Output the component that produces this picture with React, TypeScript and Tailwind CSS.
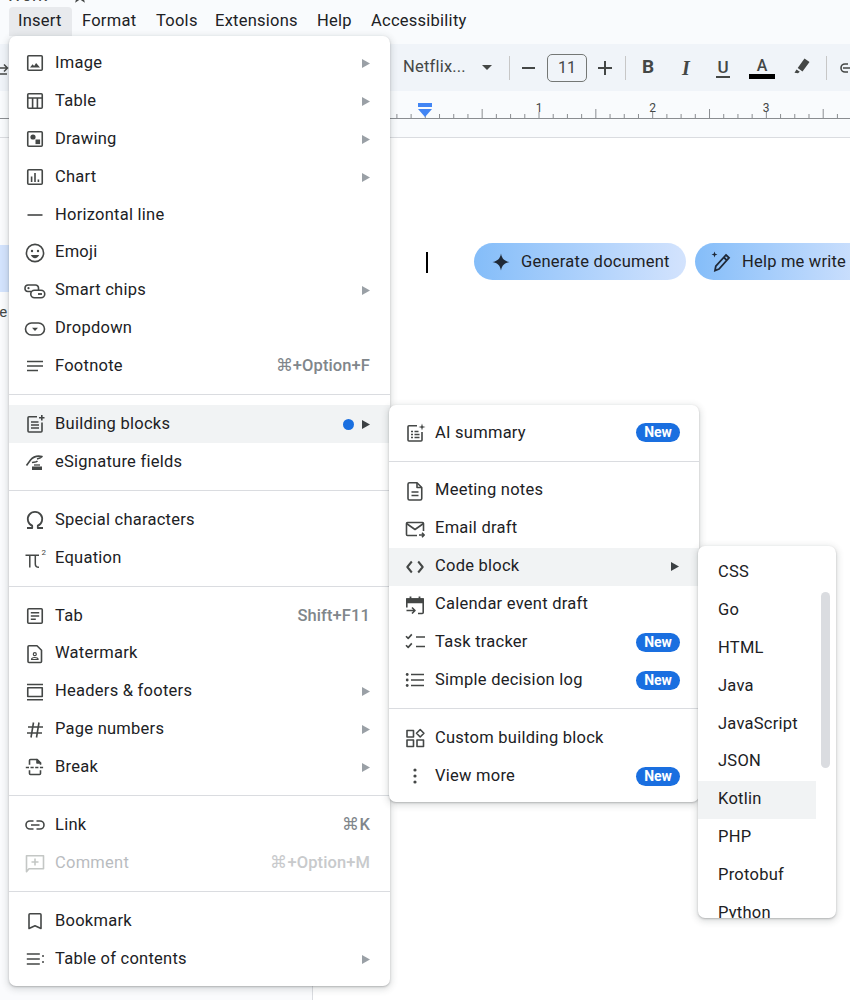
import React from "react";

const S = (p: { children: React.ReactNode; c?: string }) => (
  <svg width="24" height="24" viewBox="0 0 24 24" fill="none" stroke={p.c || "#444746"} strokeWidth="1.6" strokeLinecap="butt" strokeLinejoin="round" className="shrink-0">
    {p.children}
  </svg>
);
const G = "#444746";
const box = <rect x="4.75" y="4.75" width="14.5" height="14.5" rx="1" />;

const icons: Record<string, React.ReactNode> = {
  image: <S>{box}<path d="M7 16.5l2.6-3.2 1.5 1.6 2-3 3.9 4.6z" fill={G} stroke="none" /></S>,
  table: <S>{box}<path d="M4.75 9h14.5M9.6 9v10.25M14.4 9v10.25" /></S>,
  drawing: <S>{box}<circle cx="10" cy="10" r="2.6" fill={G} stroke="none" /><rect x="12.5" y="12.5" width="4.6" height="4.6" fill={G} stroke="none" /></S>,
  chart: <S>{box}<path d="M8.6 11.5v5.5M12 8v9M15.4 14.5V17" /></S>,
  hline: <S><path d="M4.5 12h15" /></S>,
  emoji: <S><circle cx="12" cy="12" r="8.6" /><circle cx="9" cy="10" r="1.2" fill={G} stroke="none" /><circle cx="15" cy="10" r="1.2" fill={G} stroke="none" /><path d="M7.8 14c.9 2 2.4 3.2 4.2 3.2s3.300-1.200 4.200-3.200z" fill={G} stroke="none" /></S>,
  chips: <S><path d="M15.500 11.500V9a3 3 0 0 0-3-3H5.500a3.250 3.250 0 0 0-.5 6.500h3" /><rect x="7.750" y="11.250" width="14" height="7.500" rx="3.750" /><circle cx="5.500" cy="9.200" r="1.100" fill={G} stroke="none" /><path d="M15 15h4" strokeWidth="1.800" /></S>,
  dropdown: <S><rect x="2.500" y="6" width="19" height="12" rx="6" /><path d="M9 10.800h6l-3 3.200z" fill={G} stroke="none" /></S>,
  footnote: <S><path d="M4 7.500h16M4 12h16M4 16.500h11" /></S>,
  blocks: <S><path d="M14 4.750H6a1 1 0 0 0-1 1V19a1 1 0 0 0 1 1h12a1 1 0 0 0 1-1v-8.500" /><path d="M8 10h7.500M8 13h8M8 16h8" /><path d="M18.800 3v5.500M16 5.750h5.500" /></S>,
  esig: <S><path d="M3.500 15.500l4-5.500c2.500-3 7-4.500 11.500-3.500-1 1.500-3 2-5 2.500M9 12.500c1.500-.5 4 0 5.500-1.500" /><rect x="9" y="16.500" width="10" height="3.500" fill={G} stroke="none" /><path d="M11 15h6" strokeWidth="1.300" /></S>,
  omega: <S><path d="M4 20h5.200v-2.300a7.200 7.200 0 1 1 5.600 0V20H20" strokeWidth="1.800" /></S>,
  pi: <S><path d="M2.500 9.200h13.500M6.800 9.200v12.300M12.300 9.200v8.800c0 2 1 3.300 3.700 3.300" strokeWidth="1.500" /><text x="18.500" y="9" fontSize="8" fill={G} stroke="none" fontFamily="Roboto">2</text></S>,
  tab: <S>{box}<path d="M7.800 8.700h8.400M7.800 12h8.400M7.800 15.300h5" /></S>,
  watermark: <S><path d="M6 3.750h8l4.500 4.500V19.500a1 1 0 0 1-1 1H6a1 1 0 0 1-1-1V4.750a1 1 0 0 1 1-1z" /><circle cx="11.800" cy="12.200" r="1.500" strokeWidth="1.200" /><path d="M8.500 17.500a3.300 2 0 0 1 6.600 0z" strokeWidth="1.200" /></S>,
  headers: <S><path d="M4 4.500h16M4 19.750h16" /><rect x="4.750" y="7.750" width="14.500" height="8.700" /></S>,
  hash: <S><path d="M5 9h15M4 15h15M10.500 4.500L8 19.500M16 4.500l-2.500 15" /></S>,
  breakI: <S><path d="M6.500 9.800V5.500a1 1 0 0 1 1-1h6.500l3.500 3.500v1.800" /><path d="M14 4.500v3.500h3.500z" fill={G} /><path d="M2.800 12.500h18.500" strokeDasharray="3.200 1.500" /><path d="M6.500 15.300v3.200a1 1 0 0 0 1 1h9a1 1 0 0 0 1-1v-3.200" /></S>,
  link: <S><path d="M10.500 8H7a4 4 0 0 0 0 8h3.500M13.500 8H17a4 4 0 0 1 0 8h-3.500M8 12h8.500" /></S>,
  comment: <S c="#c4c7c5"><path d="M3.500 4.750h17v13H6l-2.500 3z" /><path d="M12 7.500v7M8.500 11h7" /></S>,
  bookmark: <S><path d="M7 4.750h10a1 1 0 0 1 1 1V19.500l-6-2.700-6 2.700V5.750a1 1 0 0 1 1-1z" /></S>,
  toc: <S><path d="M3.800 7h13M3.800 12h13M3.800 17h13" /><circle cx="20" cy="9" r="1" fill={G} stroke="none" /><circle cx="20" cy="15" r="1" fill={G} stroke="none" /></S>,
  ai: <S><path d="M14 4.750H6a1 1 0 0 0-1 1V19a1 1 0 0 0 1 1h12a1 1 0 0 0 1-1v-8" /><path d="M8 10.500h2M11.500 10.500h4M8 13.500h2M11.500 13.500h5M8 16.500h2M11.500 16.500h5" /><path d="M19 2.500l.8 2.700 2.700.8-2.700.8-.8 2.700-.8-2.700-2.700-.8 2.700-.8z" fill={G} stroke="none" /></S>,
  meeting: <S><path d="M6.500 3.750h7.500l4.750 4.750V19.500a1.500 1.500 0 0 1-1.500 1.500H6.500A1.500 1.500 0 0 1 5 19.500V5.250a1.500 1.500 0 0 1 1.500-1.500z" /><path d="M14 3.750V8.500h4.750M8.500 13h7M8.500 16.500h7" /></S>,
  email: <S><path d="M14 18.500H4.500a1 1 0 0 1-1-1V6.500a1 1 0 0 1 1-1h15a1 1 0 0 1 1 1V14" /><path d="M3.500 6.500L12 12.500l8.500-6" /><path d="M16 18h5M19 15.800l2.200 2.200-2.200 2.200" /></S>,
  code: <S><path d="M8.800 6.500L4.300 12l4.500 5.500M15.200 6.500l4.500 5.500-4.500 5.500" strokeWidth="2" /></S>,
  cal: <S><path d="M3.800 14.500V6h16.400v13.500a1 1 0 0 1-1 1H15" /><path d="M3.800 6h16.400v3.500H3.800z" fill={G} /><path d="M7.500 3.500V6M16.500 3.500V6" strokeWidth="1.800" /><path d="M3.500 17.500h8M9 14.500l3 3-3 3" /></S>,
  task: <S><path d="M3 6.200l2.200 2.200 3.600-4M3 15.200l2.200 2.200 3.600-4" /><path d="M13 7h9M13 16.500h9" /></S>,
  list: <S><path d="M8 6.500h13M8 12h13M8 17.500h13" /><circle cx="4.200" cy="6.500" r="1.400" fill={G} stroke="none" /><circle cx="4.200" cy="12" r="1.400" fill={G} stroke="none" /><circle cx="4.200" cy="17.500" r="1.400" fill={G} stroke="none" /></S>,
  custom: <S><rect x="4" y="4.500" width="6.500" height="6.500" /><rect x="4" y="14" width="6.500" height="6.500" /><rect x="14" y="14" width="6.500" height="6.500" /><path d="M17.200 3.500l3.700 3.800-3.700 3.700-3.700-3.700z" /></S>,
  more: <S><circle cx="12" cy="6" r="1.600" fill={G} stroke="none" /><circle cx="12" cy="12" r="1.600" fill={G} stroke="none" /><circle cx="12" cy="18" r="1.600" fill={G} stroke="none" /></S>,
};

const Arrow = ({ dark }: { dark?: boolean }) => (
  <svg width="8" height="9" viewBox="0 0 8 9" className="ml-auto shrink-0">
    <path d="M0 0l8 4.500L0 9z" fill={dark ? "#3c4043" : "#9aa0a6"} />
  </svg>
);

type R = { t: string; i: string; arrow?: boolean; sc?: string; off?: boolean; hot?: boolean; dot?: boolean; isNew?: boolean };

const Row = ({ r }: { r: R }) => (
  <div className={`flex h-[37.9px] items-center pl-[14px] ${r.isNew ? "pr-[19px]" : "pr-[20px]"} ${r.hot ? "bg-[#f1f3f4]" : ""}`}>
    <span className="mr-[8px] flex">{icons[r.i]}</span>
    <span className={`whitespace-nowrap text-[16.5px] tracking-[0.25px] ${r.off ? "text-[#b9bcbf]" : "text-[#202124]"}`}>{r.t}</span>
    {r.sc && <span className={`ml-auto whitespace-nowrap text-[16.5px] font-medium tracking-[0.1px] ${r.off ? "text-[#c8cacc]" : "text-[#80868b]"}`}>{r.sc}</span>}
    {r.dot && <span className="ml-auto h-[11px] w-[11px] rounded-full bg-[#1a6fe0]" />}
    {r.arrow && (r.dot ? <span className="ml-[8px] flex"><svg width="8" height="9" viewBox="0 0 8 9"><path d="M0 0l8 4.500L0 9z" fill="#3c4043" /></svg></span> : <Arrow dark={r.hot} />)}
    {r.isNew && <span className="ml-auto flex h-[19px] w-[44px] items-center justify-center rounded-full bg-[#1a6fe0] text-[14px] font-bold text-white">New</span>}
  </div>
);

const Div = () => <div className="mb-[10px] mt-[9px] h-px bg-[#dadce0]" />;

const main: R[][] = [
  [
    { t: "Image", i: "image", arrow: true },
    { t: "Table", i: "table", arrow: true },
    { t: "Drawing", i: "drawing", arrow: true },
    { t: "Chart", i: "chart", arrow: true },
    { t: "Horizontal line", i: "hline" },
    { t: "Emoji", i: "emoji" },
    { t: "Smart chips", i: "chips", arrow: true },
    { t: "Dropdown", i: "dropdown" },
    { t: "Footnote", i: "footnote", sc: "⌘+Option+F" },
  ],
  [
    { t: "Building blocks", i: "blocks", arrow: true, hot: true, dot: true },
    { t: "eSignature fields", i: "esig" },
  ],
  [
    { t: "Special characters", i: "omega" },
    { t: "Equation", i: "pi" },
  ],
  [
    { t: "Tab", i: "tab", sc: "Shift+F11" },
    { t: "Watermark", i: "watermark" },
    { t: "Headers & footers", i: "headers", arrow: true },
    { t: "Page numbers", i: "hash", arrow: true },
    { t: "Break", i: "breakI", arrow: true },
  ],
  [
    { t: "Link", i: "link", sc: "⌘K" },
    { t: "Comment", i: "comment", sc: "⌘+Option+M", off: true },
  ],
  [
    { t: "Bookmark", i: "bookmark" },
    { t: "Table of contents", i: "toc", arrow: true },
  ],
];

const sub: R[][] = [
  [{ t: "AI summary", i: "ai", isNew: true }],
  [
    { t: "Meeting notes", i: "meeting" },
    { t: "Email draft", i: "email" },
    { t: "Code block", i: "code", arrow: true, hot: true },
    { t: "Calendar event draft", i: "cal" },
    { t: "Task tracker", i: "task", isNew: true },
    { t: "Simple decision log", i: "list", isNew: true },
  ],
  [
    { t: "Custom building block", i: "custom" },
    { t: "View more", i: "more", isNew: true },
  ],
];

const langs = ["CSS", "Go", "HTML", "Java", "JavaScript", "JSON", "Kotlin", "PHP", "Protobuf", "Python"];
const shadow = "shadow-[0_2px_6px_2px_rgba(60,64,67,0.15),0_1px_2px_rgba(60,64,67,0.3)]";

const Menu = ({ groups }: { groups: R[][] }) => (
  <>
    {groups.map((g, i) => (
      <div key={i}>
        {i > 0 && <Div />}
        {g.map((r) => (
          <Row key={r.t} r={r} />
        ))}
      </div>
    ))}
  </>
);

const ticks = Array.from({ length: 34 }, (_, i) => i);

export default function App() {
  return (
    <div className="relative h-[1000px] w-[850px] overflow-hidden bg-white text-[#202124] [font-family:Roboto,sans-serif]">
      <div className="flex h-[44px] flex-col bg-[#f9fbfd]">
        <div className="-mt-[15px] mb-[2px] flex h-[20px] shrink-0 items-end pl-[6px] text-[18px] leading-[20px] text-[#444746]">
          <span className="w-[67px]">Work</span>
          <svg width="14" height="14" viewBox="0 0 14 14" className="mb-[2px] shrink-0"><path d="M7 1l1.800 4h4.200l-3.400 2.800 1.200 4.400L7 9.700l-3.800 2.500 1.200-4.400L1 5h4.200z" fill="none" stroke={G} strokeWidth="1.300" /></svg>
        </div>
        <div className="flex h-[29px] shrink-0 items-center text-[16.5px] tracking-[0.25px] text-[#202124]">
          <span className="ml-[9px] flex h-[29px] w-[63px] items-center rounded-t-[4px] bg-[#e8eaed] pl-[9px]">Insert</span>
          <span className="ml-[10px] w-[74px]">Format</span>
          <span className="w-[59px]">Tools</span>
          <span className="w-[102px]">Extensions</span>
          <span className="w-[54px]">Help</span>
          <span>Accessibility</span>
        </div>
      </div>

      <div className="flex h-[47px] items-center bg-[#f0f4f9] text-[#444746]">
        <svg width="10" height="20" viewBox="0 0 10 20" className="shrink-0"><path d="M0 10h7M4 6.500L7.500 10 4 13.500M0 16h7" stroke={G} strokeWidth="1.500" fill="none" /></svg>
        <span className="ml-[393px] w-[79px] shrink-0 text-[16.5px] tracking-[0.2px]">Netflix...</span>
        <svg width="10" height="5" viewBox="0 0 10 5" className="shrink-0"><path d="M0 0h10L5 5z" fill={G} /></svg>
        <span className="ml-[17px] h-[24px] w-px shrink-0 bg-[#c7c7c7]" />
        <span className="ml-[12px] h-[2px] w-[13px] shrink-0 bg-[#444746]" />
        <span className="ml-[12px] flex h-[28px] w-[40px] shrink-0 items-center justify-center rounded-[5px] border border-[#747775] text-[16px]">11</span>
        <svg width="14" height="14" viewBox="0 0 14 14" className="ml-[11px] shrink-0"><path d="M7 0v14M0 7h14" stroke={G} strokeWidth="2" /></svg>
        <span className="ml-[13px] h-[24px] w-px shrink-0 bg-[#c7c7c7]" />
        <span className="ml-[16px] w-[12px] shrink-0 text-center text-[19px] font-bold">B</span>
        <span className="ml-[26px] w-[12px] shrink-0 text-center text-[20px] font-bold italic [font-family:'Liberation_Serif',serif]">I</span>
        <span className="ml-[24px] w-[14px] shrink-0 border-b-[2px] border-[#444746] text-center text-[17px] font-medium leading-[18px]">U</span>
        <span className="ml-[19px] flex w-[26px] shrink-0 flex-col items-center">
          <span className="text-[16px] font-medium leading-[17px]">A</span>
          <span className="h-[5px] w-[26px] bg-black" />
        </span>
        <svg width="18" height="18" viewBox="0 0 18 18" className="-mt-[4px] ml-[18px] shrink-0"><path d="M11.500 1.500l5 3.500-7 9.500-4.800-3.400zM3.500 12.500l3.300 2.300-1.800 1.400-3.500-.5z" fill={G} /></svg>
        <span className="ml-[15px] h-[24px] w-px shrink-0 bg-[#c7c7c7]" />
        <svg width="14" height="12" viewBox="0 0 14 12" className="ml-[13px] shrink-0"><path d="M8 2H5a4 4 0 0 0 0 8h3M3 6h11" stroke={G} strokeWidth="1.600" fill="none" /></svg>
      </div>

      <div className="relative h-[47px] border-b border-[#dadce0] bg-[#f9fbfd]">
        <svg width="850" height="46" viewBox="0 0 850 46" className="block">
          <path d="M0 27.500h850" stroke="#8a8d91" strokeWidth="1" />
          {ticks.map((i) => {
            const x = 396.900 + i * 14.210;
            const k = i % 8;
            const h = k === 6 ? 9 : k === 2 ? 6 : 4;
            return <path key={i} d={`M${x} ${27 - h}V27`} stroke="#8a8d91" strokeWidth="1" />;
          })}
          <text x="539" y="21" textAnchor="middle" fontSize="12" fill={G}>1</text>
          <text x="652.500" y="21" textAnchor="middle" fontSize="12" fill={G}>2</text>
          <text x="766" y="21" textAnchor="middle" fontSize="12" fill={G}>3</text>
          <path d="M418 12h14v4h-14zM418 18h14l-7 8z" fill="#4285f4" />
        </svg>
      </div>

      <div className="flex h-[862px]">
        <div className="w-[313px] shrink-0 border-r border-[#dadce0] bg-[#fafbfd] pt-[107px]">
          <div className="h-[47px] bg-[#d3e3fd]" />
          <div className="-ml-[9px] mt-[12px] text-[15px] leading-[16px] text-[#444746]">ne</div>
        </div>
        <div className="mt-[105px] flex h-[37px] items-center">
          <span className="ml-[113px] mt-[2px] h-[21px] w-[2px] bg-black" />
          <span className="ml-[46px] flex h-[37px] w-[212px] shrink-0 items-center rounded-full bg-gradient-to-r from-[#84bdf9] to-[#d3e3fd] pl-[17px] pt-[1px] text-[16.5px] tracking-[0.25px] text-[#202124]">
            <svg width="20" height="20" viewBox="0 0 20 20" className="mr-[10px] shrink-0"><path d="M10 1.500c.8 5 3.500 7.700 8.500 8.500-5 .8-7.700 3.500-8.500 8.500-.8-5-3.500-7.700-8.500-8.500 5-.8 7.700-3.500 8.500-8.500z" fill="#1f2937" /></svg>
            Generate document
          </span>
          <span className="ml-[9px] flex h-[37px] w-[180px] shrink-0 items-center rounded-full bg-gradient-to-r from-[#84bdf9] to-[#d3e3fd] pl-[15px] pt-[1px] text-[16.5px] tracking-[0.2px] text-[#202124]">
            <svg width="22" height="22" viewBox="0 0 22 22" className="mr-[10px] shrink-0"><path d="M4.500 0.500l.8 2.200 2.200.8-2.200.8-.8 2.200-.8-2.200-2.200-.8 2.200-.8z" fill="#1f2937" /><path d="M16 4l3 2.800L9 18l-4 1.500.8-4.300zM14 6.500l2.800 2.800" fill="none" stroke="#1f2937" strokeWidth="1.800" /></svg>
            Help me write
          </span>
        </div>
      </div>

      <div className={`absolute left-[9px] top-[36px] h-[950px] w-[381px] rounded-[7px] bg-white pt-[8.4px] ${shadow}`}>
        <Menu groups={main} />
      </div>

      <div className={`absolute left-[389px] top-[405px] h-[397px] w-[310px] rounded-[7px] bg-white pt-[9px] ${shadow}`}>
        <Menu groups={sub} />
      </div>

      <div className={`absolute left-[698px] top-[546px] h-[372px] w-[138px] overflow-hidden rounded-[7px] bg-white pt-[7.4px] ${shadow}`}>
        {langs.map((l) => (
          <div key={l} className={`flex h-[37.9px] w-[118px] items-center pl-[20px] text-[16.5px] tracking-[0.25px] text-[#202124] ${l === "Kotlin" ? "bg-[#f1f3f4]" : ""}`}>
            {l}
          </div>
        ))}
        <div className="absolute left-[123px] top-[46px] h-[176px] w-[9px] rounded-full bg-[#dadce0]" />
      </div>
    </div>
  );
}
